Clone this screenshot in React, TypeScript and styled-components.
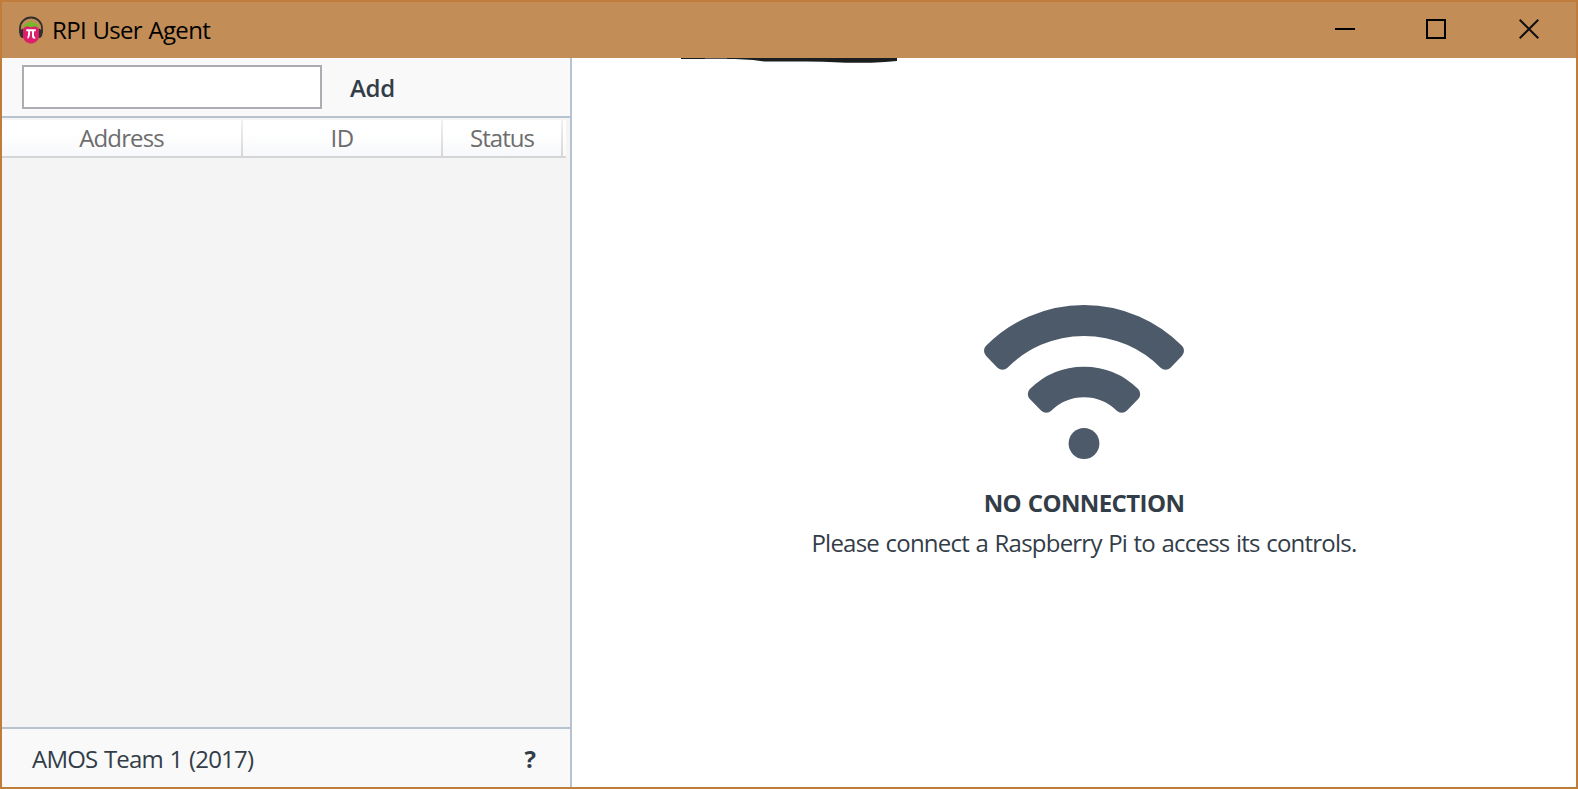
import React from "react";
import styled, { createGlobalStyle } from "styled-components";

const GlobalStyle = createGlobalStyle`
  * { box-sizing: border-box; }
  body { margin: 0; }
`;

const Window = styled.div`
  display: flex;
  flex-direction: column;
  width: 1578px;
  height: 789px;
  border: 2px solid #c07c3b;
  background: #fff;
  font-family: "Open Sans", "Noto Sans", sans-serif;
  font-size: 24px;
  line-height: 32px;
  color: #333d48;
  overflow: hidden;
`;

const TitleBar = styled.header`
  display: flex;
  align-items: center;
  height: 56px;
  flex: none;
  padding-left: 16px;
  background: #c38d57;
  color: #000;
`;

const Label = styled.span<{ $spacing?: number; $weight?: number }>`
  white-space: nowrap;
  font-weight: ${(p) => p.$weight ?? 400};
  letter-spacing: ${(p) => p.$spacing ?? 0}px;
  word-spacing: 1px;
`;

const AppTitle = styled.h1`
  display: flex;
  flex: 1;
  margin: 0 0 0 8px;
  font-size: 24px;
  font-weight: 400;
`;

const Controls = styled.div`
  display: flex;
  height: 54px;
  align-self: flex-start;
`;

const ControlButton = styled.button<{ $width: number }>`
  display: flex;
  align-items: center;
  justify-content: center;
  width: ${(p) => p.$width}px;
  padding: 0;
  border: 0;
  background: none;
`;

const Body = styled.div`
  display: flex;
  flex: 1;
  min-height: 0;
`;

const Sidebar = styled.aside`
  display: flex;
  flex-direction: column;
  width: 570px;
  border-right: 2px solid #b8c3d0;
  background: #f4f4f4;
`;

const Toolbar = styled.div`
  display: flex;
  align-items: center;
  height: 60px;
  padding: 0 0 0 20px;
  border-bottom: 2px solid #b8c3d0;
  background: #f9f9f9;
`;

const AddressInput = styled.input`
  width: 300px;
  height: 44px;
  border: 2px solid #abadb3;
  border-radius: 0;
  background: #fff;
  font: inherit;
  outline: 0;
`;

const TextButton = styled.button<{ $margin: string }>`
  display: flex;
  margin: ${(p) => p.$margin};
  padding: 0;
  border: 0;
  background: none;
  font: inherit;
  color: inherit;
`;

const ColumnHeader = styled.div`
  display: flex;
  width: 564px;
  height: 38px;
  margin-top: 2px;
  border-bottom: 2px solid #d5d5d5;
  background: linear-gradient(#fff 35%, #f7f8fa);
  color: #6d6d6d;
`;

const Column = styled.div<{ $width: number }>`
  display: flex;
  align-items: center;
  justify-content: center;
  width: ${(p) => p.$width}px;
  border-right: 2px solid;
  border-image: linear-gradient(#f2f2f2, #d5d5d5) 1;
`;

const DeviceList = styled.div`
  flex: 1;
`;

const Footer = styled.footer`
  display: flex;
  align-items: center;
  justify-content: space-between;
  height: 60px;
  padding: 2px 34px 0 30px;
  border-top: 2px solid #b8c3d0;
  background: #f9f9f9;
`;

const Main = styled.main`
  position: relative;
  display: flex;
  flex: 1;
  flex-direction: column;
  align-items: center;
  padding: 247px 0 0 20px;
`;

const TopStrip = styled.svg`
  position: absolute;
  top: 0;
  left: 109px;
`;

const Heading = styled.h2`
  display: flex;
  margin: 28px 0 8px;
  font-size: 24px;
`;

const Message = styled.p`
  display: flex;
  margin: 0;
`;

function AppIcon() {
  return (
    <svg width="26" height="28" viewBox="0 0 26 28">
      <path d="M2 17V12.500a11 11 0 0 1 22 0V17" fill="none" stroke="#30302e" strokeWidth="1.800" />
      <path d="M5 11.500C6.500 10 5.500 7.500 9 7.500L9.500 6l2 .5L13 4.500l1.500 2 2-.5.5 1.500c3.500 0 2.500 2.500 4 4z" fill="#75b82a" />
      <path d="M4.500 16C4.500 12 7 10.300 10 10.500l3 .7 3-.7c3-.2 5.500 1.500 5.500 5.500 1 6-3 11.500-8.500 11.500S3.500 22 4.500 16z" fill="#dc1f68" />
      <path d="M5 12.500v9.500C3 22 1.500 20 1.500 17.500s1.500-4.500 3.500-5zM21 12.500v9.500c2 0 3.500-2 3.500-4.500s-1.500-4.500-3.500-5z" fill="#30302e" />
      <path d="M8.300 14.200H17.700M11.200 14.200C11.200 18 11 21.500 9.500 21.800M15 14.200V20q0 2 2.200 1.600" fill="none" stroke="#fff" strokeWidth="2" />
    </svg>
  );
}

function WifiIcon() {
  return (
    <svg width="200" height="154" viewBox="0 0 200 154" fill="#4d5a6a" stroke="#4d5a6a" strokeLinejoin="round">
      <path
        strokeWidth="14"
        d="M7 45.800A131 131 0 0 1 193 45.800L181.500 57.800A115 115 0 0 0 18.500 57.800Z"
      />
      <path
        strokeWidth="14"
        d="M50.800 89A69.600 69.600 0 0 1 149.200 89L137.700 100.800A53.300 53.300 0 0 0 62.300 100.800Z"
      />
      <circle cx="100" cy="138.500" r="15.400" stroke="none" />
    </svg>
  );
}

export default function App() {
  return (
    <Window>
      <GlobalStyle />
      <TitleBar>
        <AppIcon />
        <AppTitle>
          <Label $spacing={-0.68}>RPI User Agent</Label>
        </AppTitle>
        <Controls>
          <ControlButton $width={90} aria-label="Minimize">
            <svg width="20" height="20"><path d="M0 10H20" stroke="#000" strokeWidth="2" /></svg>
          </ControlButton>
          <ControlButton $width={92} aria-label="Maximize">
            <svg width="20" height="20"><rect x="1" y="1" width="18" height="18" fill="none" stroke="#000" strokeWidth="2" /></svg>
          </ControlButton>
          <ControlButton $width={94} aria-label="Close">
            <svg width="20" height="20"><path d="M.7.7L19.300 19.300M19.300.7L.7 19.300" stroke="#111" strokeWidth="2" /></svg>
          </ControlButton>
        </Controls>
      </TitleBar>
      <Body>
        <Sidebar>
          <Toolbar>
            <AddressInput aria-label="Device address" />
            <TextButton $margin="2px 0 0 28px"><Label $weight={600} $spacing={-0.3}>Add</Label></TextButton>
          </Toolbar>
          <ColumnHeader>
            <Column $width={241}><Label $spacing={-0.9}>Address</Label></Column>
            <Column $width={200}><Label $spacing={-0.5}>ID</Label></Column>
            <Column $width={120}><Label $spacing={-1}>Status</Label></Column>
          </ColumnHeader>
          <DeviceList />
          <Footer>
            <Label $spacing={-0.78}>AMOS Team 1 (2017)</Label>
            <TextButton $margin="0"><Label $weight={700}>?</Label></TextButton>
          </Footer>
        </Sidebar>
        <Main>
          <TopStrip width="216" height="5" viewBox="0 0 216 5">
            <path d="M0 0H216V3L204 4L190 4.800H165L142 3.800L125 3.600H84L72 2L54 1H0Z" fill="#1b1e1f" />
            <path d="M24 .5H46" stroke="#555" />
          </TopStrip>
          <WifiIcon />
          <Heading><Label $weight={700} $spacing={-0.6}>NO CONNECTION</Label></Heading>
          <Message><Label $spacing={-0.77}>Please connect a Raspberry Pi to access its controls.</Label></Message>
        </Main>
      </Body>
    </Window>
  );
}
